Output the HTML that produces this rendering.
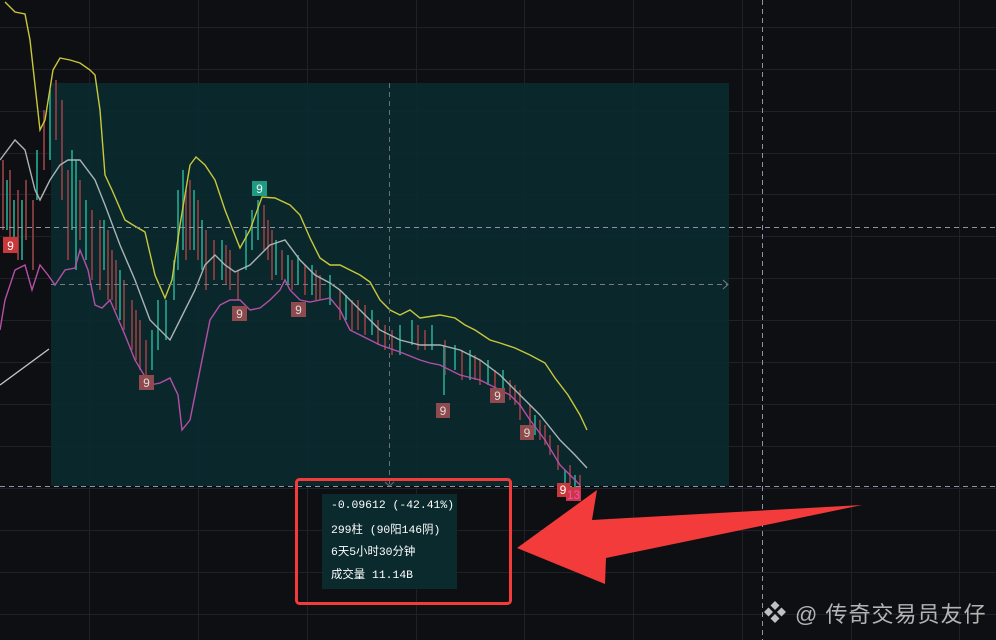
<!DOCTYPE html>
<html><head><meta charset="utf-8"><style>
html,body{margin:0;padding:0;background:#0e0f12;width:996px;height:640px;overflow:hidden}
svg{position:absolute;left:0;top:0}
.tip{position:absolute;left:322px;top:494px;width:135px;height:95px;background:#0b2a2e;color:#ffffff;font:11.4px "Liberation Mono","Noto Sans CJK SC",monospace}
.tip div{position:absolute;left:9px;white-space:nowrap}
.wm{position:absolute;left:795px;top:597px;color:#b4b4b4;font:22px "Liberation Sans","Noto Sans CJK SC",sans-serif;white-space:nowrap;letter-spacing:1px}
</style></head><body>
<svg width="996" height="640" viewBox="0 0 996 640">
<g stroke="#1e2126" stroke-width="1">
<line x1="89.5" y1="0" x2="89.5" y2="640"/><line x1="198.5" y1="0" x2="198.5" y2="640"/><line x1="307.5" y1="0" x2="307.5" y2="640"/><line x1="416.5" y1="0" x2="416.5" y2="640"/><line x1="524.5" y1="0" x2="524.5" y2="640"/><line x1="633.5" y1="0" x2="633.5" y2="640"/><line x1="742.5" y1="0" x2="742.5" y2="640"/><line x1="851.5" y1="0" x2="851.5" y2="640"/><line x1="959.5" y1="0" x2="959.5" y2="640"/>
<line x1="0" y1="27.5" x2="996" y2="27.5"/><line x1="0" y1="69.5" x2="996" y2="69.5"/><line x1="0" y1="111.5" x2="996" y2="111.5"/><line x1="0" y1="153.5" x2="996" y2="153.5"/><line x1="0" y1="194.5" x2="996" y2="194.5"/><line x1="0" y1="236.5" x2="996" y2="236.5"/><line x1="0" y1="278.5" x2="996" y2="278.5"/><line x1="0" y1="320.5" x2="996" y2="320.5"/><line x1="0" y1="362.5" x2="996" y2="362.5"/><line x1="0" y1="404.5" x2="996" y2="404.5"/><line x1="0" y1="446.5" x2="996" y2="446.5"/><line x1="0" y1="488.5" x2="996" y2="488.5"/><line x1="0" y1="530.5" x2="996" y2="530.5"/><line x1="0" y1="572.5" x2="996" y2="572.5"/><line x1="0" y1="614.5" x2="996" y2="614.5"/>
</g>
<rect x="51" y="83" width="678" height="403" fill="#0b2a2e" opacity="0.95"/>
<line x1="0" y1="385" x2="49" y2="349" stroke="#c8c8c8" stroke-width="1.3"/>
<g stroke-width="2">
<g stroke="#7a3a3e">
<line x1="3" y1="160" x2="3" y2="230"/><line x1="10" y1="170" x2="10" y2="240"/><line x1="18" y1="190" x2="18" y2="260"/><line x1="26" y1="180" x2="26" y2="240"/><line x1="33" y1="200" x2="33" y2="270"/><line x1="44" y1="110" x2="44" y2="170"/><line x1="56" y1="80" x2="56" y2="140"/><line x1="62" y1="100" x2="62" y2="200"/><line x1="68" y1="170" x2="68" y2="260"/><line x1="80" y1="180" x2="80" y2="240"/><line x1="92" y1="210" x2="92" y2="280"/><line x1="100" y1="220" x2="100" y2="290"/><line x1="108" y1="230" x2="108" y2="300"/><line x1="116" y1="260" x2="116" y2="310"/><line x1="124" y1="280" x2="124" y2="330"/><line x1="132" y1="300" x2="132" y2="350"/><line x1="140" y1="320" x2="140" y2="370"/><line x1="146" y1="340" x2="146" y2="380"/><line x1="190" y1="180" x2="190" y2="250"/><line x1="198" y1="200" x2="198" y2="260"/><line x1="206" y1="230" x2="206" y2="290"/><line x1="214" y1="240" x2="214" y2="280"/><line x1="230" y1="250" x2="230" y2="290"/><line x1="238" y1="270" x2="238" y2="300"/><line x1="264" y1="205" x2="264" y2="250"/><line x1="272" y1="230" x2="272" y2="280"/><line x1="282" y1="250" x2="282" y2="280"/><line x1="292" y1="260" x2="292" y2="290"/><line x1="305" y1="265" x2="305" y2="295"/><line x1="320" y1="275" x2="320" y2="300"/><line x1="340" y1="290" x2="340" y2="320"/><line x1="352" y1="300" x2="352" y2="330"/><line x1="365" y1="305" x2="365" y2="335"/><line x1="378" y1="320" x2="378" y2="345"/><line x1="392" y1="330" x2="392" y2="355"/><line x1="425" y1="330" x2="425" y2="350"/><line x1="445" y1="340" x2="445" y2="375"/><line x1="462" y1="350" x2="462" y2="380"/><line x1="480" y1="360" x2="480" y2="385"/><line x1="495" y1="370" x2="495" y2="390"/><line x1="510" y1="380" x2="510" y2="400"/><line x1="520" y1="390" x2="520" y2="420"/><line x1="530" y1="405" x2="530" y2="430"/><line x1="540" y1="420" x2="540" y2="440"/><line x1="550" y1="435" x2="550" y2="455"/><line x1="558" y1="445" x2="558" y2="470"/><line x1="570" y1="465" x2="570" y2="485"/><line x1="580" y1="475" x2="580" y2="490"/>
<line x1="112" y1="250" x2="112" y2="300"/><line x1="136" y1="310" x2="136" y2="360"/><line x1="186" y1="190" x2="186" y2="260"/><line x1="226" y1="245" x2="226" y2="285"/><line x1="268" y1="220" x2="268" y2="260"/><line x1="316" y1="270" x2="316" y2="300"/><line x1="358" y1="300" x2="358" y2="330"/><line x1="385" y1="325" x2="385" y2="350"/><line x1="418" y1="325" x2="418" y2="350"/><line x1="475" y1="355" x2="475" y2="380"/><line x1="515" y1="385" x2="515" y2="405"/><line x1="545" y1="425" x2="545" y2="445"/>
</g>
<g stroke="#1f8f7c">
<line x1="7" y1="180" x2="7" y2="230"/><line x1="14" y1="200" x2="14" y2="250"/><line x1="22" y1="200" x2="22" y2="260"/><line x1="37" y1="150" x2="37" y2="200"/><line x1="50" y1="90" x2="50" y2="160"/><line x1="72" y1="150" x2="72" y2="230"/><line x1="76" y1="160" x2="76" y2="270"/><line x1="86" y1="200" x2="86" y2="260"/><line x1="104" y1="220" x2="104" y2="270"/><line x1="120" y1="270" x2="120" y2="320"/><line x1="152" y1="330" x2="152" y2="370"/><line x1="158" y1="300" x2="158" y2="350"/><line x1="166" y1="300" x2="166" y2="340"/><line x1="174" y1="260" x2="174" y2="300"/><line x1="178" y1="190" x2="178" y2="270"/><line x1="183" y1="170" x2="183" y2="250"/><line x1="194" y1="190" x2="194" y2="250"/><line x1="202" y1="220" x2="202" y2="270"/><line x1="222" y1="240" x2="222" y2="280"/><line x1="246" y1="230" x2="246" y2="270"/><line x1="252" y1="210" x2="252" y2="250"/><line x1="258" y1="200" x2="258" y2="240"/><line x1="276" y1="240" x2="276" y2="275"/><line x1="288" y1="255" x2="288" y2="285"/><line x1="298" y1="255" x2="298" y2="285"/><line x1="312" y1="265" x2="312" y2="295"/><line x1="330" y1="275" x2="330" y2="305"/><line x1="346" y1="295" x2="346" y2="320"/><line x1="372" y1="310" x2="372" y2="335"/><line x1="400" y1="325" x2="400" y2="355"/><line x1="412" y1="320" x2="412" y2="345"/><line x1="432" y1="325" x2="432" y2="350"/><line x1="444" y1="345" x2="444" y2="395"/><line x1="455" y1="345" x2="455" y2="370"/><line x1="470" y1="350" x2="470" y2="380"/><line x1="488" y1="360" x2="488" y2="385"/><line x1="503" y1="370" x2="503" y2="395"/><line x1="535" y1="415" x2="535" y2="435"/><line x1="565" y1="470" x2="565" y2="485"/><line x1="575" y1="475" x2="575" y2="488"/>
</g>
</g>
<g fill="none" stroke-width="1.4">
<polyline stroke="#c8c83a" points="5,2 15,12 25,14 30,40 40,130 45,120 53,70 60,58 70,60 80,63 90,70 95,75 100,110 105,175 112,190 125,220 133,225 145,232 155,275 165,298 172,280 180,225 190,165 196,157 205,165 215,180 225,210 240,248 250,230 262,197 275,198 290,205 300,215 310,238 320,258 330,265 340,265 350,270 360,275 370,282 380,300 390,310 400,315 410,310 420,318 440,315 455,318 465,325 475,330 490,340 500,343 515,348 530,355 545,363 555,378 568,395 580,415 587,430"/>
<polyline stroke="#a9b4b4" points="0,160 15,140 25,150 35,190 40,200 50,180 60,165 68,160 80,160 95,180 105,205 120,245 135,280 150,320 170,340 180,320 195,290 205,265 215,255 225,265 235,272 250,265 270,245 285,240 300,260 315,275 330,283 340,290 360,310 380,330 400,340 420,345 440,345 460,350 480,360 500,375 520,395 540,415 560,440 575,455 587,468"/>
<polyline stroke="#b54fa8" points="0,330 5,300 15,270 25,265 32,290 40,265 48,275 55,285 65,270 75,268 80,250 88,270 95,305 102,308 110,300 125,335 135,360 150,385 160,383 170,378 178,395 182,430 190,420 200,370 210,320 220,305 230,300 240,300 250,310 260,308 270,300 280,290 285,280 290,290 300,300 310,302 320,300 330,298 340,310 350,330 370,340 380,345 400,352 420,360 430,363 440,365 460,375 480,380 500,390 510,395 520,405 530,420 545,440 560,465 570,475 580,485"/>
</g>
<g stroke-dasharray="5,4" stroke-width="1">
<line x1="0" y1="227.5" x2="996" y2="227.5" stroke="#8f93a8"/>
<line x1="0" y1="486.5" x2="996" y2="486.5" stroke="#8f93a8"/>
<line x1="51" y1="284.5" x2="727" y2="284.5" stroke="#777b86"/>
<line x1="389.5" y1="83" x2="389.5" y2="486" stroke="#6c7078"/>
<line x1="762.5" y1="0" x2="762.5" y2="640" stroke="#8f93a8"/>
</g>
<polyline points="723,280 728,284.5 723,289" fill="none" stroke="#777b86"/>
<polyline points="385,482 389.5,486 394,482" fill="none" stroke="#6c7078"/>
<g font-family="Liberation Sans,sans-serif" font-size="12" text-anchor="middle">
<rect x="3" y="237" width="15" height="16" fill="#c9393b"/><text x="10.5" y="250" fill="#fff">9</text>
<rect x="252" y="181" width="15" height="15" fill="#1f9a85"/><text x="259.5" y="193" fill="#eee">9</text>
<g fill="#8e4a4d"><rect x="139" y="375" width="15" height="15"/><rect x="232" y="306" width="15" height="15"/><rect x="291" y="302" width="15" height="15"/><rect x="436" y="403" width="14" height="15"/><rect x="490" y="388" width="15" height="15"/><rect x="520" y="425" width="14" height="15"/></g>
<g fill="#ddd"><text x="146.5" y="387">9</text><text x="239.5" y="318">9</text><text x="298.5" y="314">9</text><text x="443" y="415">9</text><text x="497.5" y="400">9</text><text x="527" y="437">9</text></g>
<rect x="557" y="483" width="13" height="14" fill="#c9393b"/><text x="563" y="494" fill="#fff">9</text>
<rect x="566" y="487" width="15" height="14" fill="#c9393b"/><text x="573.5" y="499" fill="#f4d">13</text>
</g>
<rect x="296.5" y="479.5" width="214" height="124" rx="3" fill="none" stroke="#f43b3b" stroke-width="3"/>
<polygon points="517,548 597,490 592,520 862,505 606,558 605,584" fill="#f43b3b"/>
<g fill="#c0c0c0" transform="translate(775,612)">
<polygon points="0,-11 4.5,-6.5 0,-2 -4.5,-6.5"/><polygon points="0,11 4.5,6.5 0,2 -4.5,6.5"/><polygon points="-11,0 -6.5,-4.5 -2,0 -6.5,4.5"/><polygon points="11,0 6.5,-4.5 2,0 6.5,4.5"/>
</g>
</svg>
<div class="tip">
<div style="top:6px">-0.09612 (-42.41%)</div>
<div style="top:27px">299柱 (90阳146阴)</div>
<div style="top:49px">6天5小时30分钟</div>
<div style="top:72px">成交量 11.14B</div>
</div>
<div class="wm">@ 传奇交易员友仔</div>
</body></html>
